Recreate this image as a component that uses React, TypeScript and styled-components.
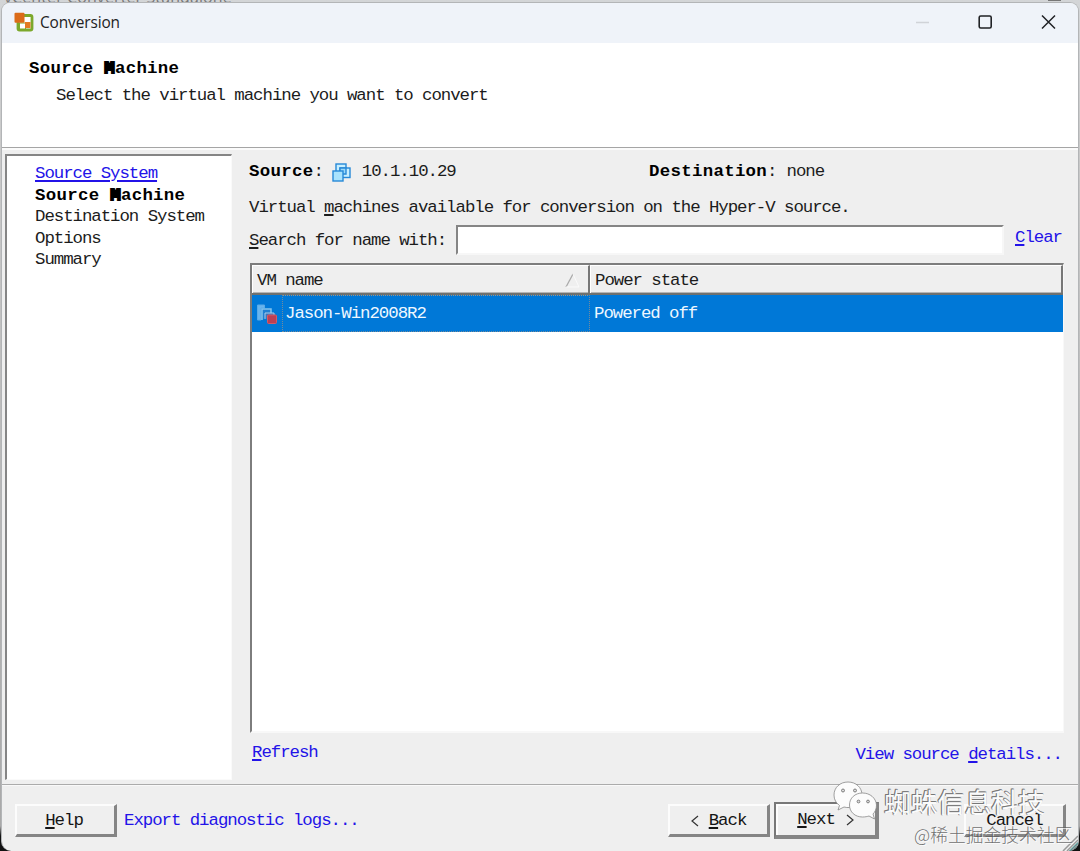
import React from "react";
import styled, { createGlobalStyle } from "styled-components";

const GlobalStyle = createGlobalStyle`
  * { box-sizing: border-box; }
  body { margin: 0; overflow: hidden; background: #d5d7d9; }
`;

const Desktop = styled.div`
  position: relative;
  width: 1080px;
  height: 851px;
  padding: 2px 1px 0 1px;
  overflow: hidden;
  background: linear-gradient(to bottom, #d3d5d7 0, #c9c9c9 150px, #a9a9a9 826px, #111 836px);
  color: #1c1c1c;
  font-family: "Liberation Mono", "Noto Sans CJK SC", monospace;
  font-size: 17.4px;
  line-height: 22px;
  letter-spacing: -1.05px;
`;

const BackWindowTitle = styled.div`
  position: absolute;
  left: 4px;
  top: -12px;
  font: 16px/18px "Open Sans", sans-serif;
  letter-spacing: 0.1px;
  color: #777;
`;

const BackWindowControl = styled.div`
  position: absolute;
  left: 1048px;
  top: 0;
  width: 13px;
  height: 1px;
  background: #777;
`;

const Window = styled.main`
  position: relative;
  display: flex;
  flex-direction: column;
  width: 1078px;
  height: 849px;
  overflow: hidden;
  background: #efefef;
  border: 1px solid #b3b5b7;
  border-bottom: 0;
  border-radius: 9px 9px 10px 10px;
`;

const TitleBar = styled.header`
  display: flex;
  align-items: center;
  flex: 0 0 40px;
  padding: 0 22px 2px 12px;
  background: #eff3f9;
`;

const AppTitle = styled.h1`
  flex: 1;
  margin: 0 0 0 5px;
  padding-top: 1px;
  font: 400 15.4px/24px "Open Sans", sans-serif;
  letter-spacing: -0.1px;
  color: #222;
`;

const WindowControls = styled.div`
  display: flex;
  gap: 48px;
`;

const Intro = styled.section`
  flex: 0 0 104px;
  padding: 15px 27px;
  background: #fff;
`;

const Strong = styled.strong`
  font-weight: 700;
  letter-spacing: 0.3px;
  color: #000;
`;

const FilledLetter = styled.span`
  -webkit-text-stroke: 2px #000;
`;

const IntroText = styled.p`
  margin: 5px 0 0 27px;
`;

const Divider = styled.hr`
  flex: 0 0 3px;
  width: 100%;
  margin: 0;
  border: 0;
  border-top: 1px solid #a5a5a5;
  background: #fbfbfb;
`;

const Body = styled.section`
  display: flex;
  flex: 0 0 634px;
  padding: 4px 13px 0 3px;
`;

const Steps = styled.nav`
  display: flex;
  flex-direction: column;
  width: 227px;
  height: 626px;
  padding: 7px 0 0 28px;
  background: #fff;
  border: solid #fafafa;
  border-width: 2px 1px 1px 2px;
  border-top-color: #858585;
  border-left-color: #858585;
  line-height: 21.6px;
`;

const Link = styled.a<{ $underlined?: boolean }>`
  color: #2313e8;
  text-decoration: ${(p) => (p.$underlined ? "underline" : "none")};
  text-decoration-thickness: 1.5px;
  text-underline-offset: 2px;
  white-space: nowrap;
`;

const Key = styled.span`
  text-decoration: underline;
  text-decoration-thickness: 1.5px;
  text-underline-offset: 2px;
`;

const Content = styled.section`
  display: flex;
  flex-direction: column;
  flex: 1;
  padding-left: 17px;
`;

const Endpoints = styled.div`
  display: grid;
  grid-template-columns: 400px 1fr;
  height: 22px;
  margin-top: 7px;
`;

const Endpoint = styled.div`
  display: flex;
  align-items: center;
`;

const SourceAddress = styled.span`
  display: flex;
  align-items: center;
  gap: 11px;
  margin-left: 9px;
`;

const DestinationName = styled.span`
  margin-left: 10px;
`;

const Hint = styled.p`
  margin: 14px 0 0;
`;

const SearchRow = styled.div`
  display: flex;
  height: 31px;
  margin-top: 6px;
`;

const SearchLabel = styled.label`
  width: 207px;
  padding-top: 5px;
`;

const SearchInput = styled.input`
  width: 548px;
  height: 30px;
  padding: 0 6px;
  background: #fff;
  border: 2px solid #f7f7f7;
  border-top-color: #858585;
  border-left-color: #858585;
  border-radius: 0;
  outline: 0;
`;

const ClearCell = styled.div`
  padding: 2px 0 0 11px;
`;

const Table = styled.div`
  display: flex;
  flex-direction: column;
  width: 814px;
  height: 470px;
  margin: 7px 0 0 1px;
  background: #fff;
  border: solid #f8f8f8;
  border-width: 2px 1px 2px 2px;
  border-top-color: #7d7d7d;
  border-left-color: #7d7d7d;
`;

const TableHead = styled.div`
  display: grid;
  grid-template-columns: 338px 1fr;
  flex: 0 0 30px;
  background: #efefef;
  border-bottom: 2px solid #6f716f;
`;

const HeadCell = styled.div`
  display: flex;
  justify-content: space-between;
  align-items: center;
  padding: 2px 7px 0 4px;
  border-top: 1px solid #fff;
  border-right: 2px solid #777;
  border-left: 1px solid #fff;
  box-shadow: inset 0 -1px 0 #b5b5b5;
`;

const TableRow = styled.div`
  display: grid;
  grid-template-columns: 30px 308px 1fr;
  flex: 0 0 37px;
  color: #eef7ff;
  background: #0078d7;
`;

const IconCell = styled.div`
  display: flex;
  align-items: center;
  padding-left: 4px;
`;

const NameCell = styled.div`
  display: flex;
  align-items: center;
  padding-left: 2px;
  border: 1px dotted #748b9b;
  border-top-color: #9c9488;
`;

const StateCell = styled.div`
  display: flex;
  align-items: center;
  padding-left: 4px;
`;

const TableLinks = styled.div`
  display: flex;
  justify-content: space-between;
  margin-top: 9px;
  padding: 0 3px 0 3px;
`;

const DetailsLink = styled(Link)`
  padding-top: 2px;
`;

const Footer = styled.footer`
  display: flex;
  align-items: center;
  flex: 1;
  padding: 5px 12px 0 13px;
  border-top: 1px solid #ababab;
  box-shadow: inset 0 1px 0 #f9f9f9;
`;

const Button = styled.button<{ $primary?: boolean }>`
  display: flex;
  align-items: center;
  justify-content: center;
  width: ${(p) => (p.$primary ? 105 : 102)}px;
  height: ${(p) => (p.$primary ? 37 : 33)}px;
  padding: 1px 0 0;
  background: #efefef;
  border: 2px solid #fcfcfc;
  border-right: ${(p) => (p.$primary ? 4 : 3)}px solid #858585;
  border-bottom: ${(p) => (p.$primary ? 4 : 3)}px solid #858585;
  ${(p) =>
    p.$primary &&
    "border-top-color: #777; border-left-color: #777; box-shadow: inset 2px 2px 0 #fcfcfc;"}
  color: #151515;
  font: inherit;
  letter-spacing: inherit;
`;

const HelpButton = styled(Button)`
  padding-right: 3px;
`;

const ExportLink = styled(Link)`
  flex: 1;
  margin-left: 7px;
`;

const WizardButtons = styled.div`
  display: flex;
  align-items: center;
  gap: 4px;
`;

const CancelSlot = styled.div`
  display: flex;
  margin-left: 81px;
`;

const Chevron = styled.svg`
  width: 8px;
  height: 14px;
  margin: 0 10px 0 0;
  fill: none;
  stroke: #333;
  stroke-width: 1.2;
`;

const NextChevron = styled(Chevron)`
  margin: 0 0 0 11px;
`;

const Grip = styled.svg`
  position: absolute;
  right: 0;
  bottom: 0;
`;

const AccountMark = styled.div`
  position: absolute;
  left: 833px;
  top: 779px;
  display: flex;
  gap: 7px;
`;

const AccountName = styled.span`
  margin-top: 4px;
  font: 400 27px/38px "Noto Sans CJK SC", sans-serif;
  letter-spacing: -0.2px;
  color: #fbfbfb;
  text-shadow: -1px -1px 0 #777, 0 -1px 0 #888, -1px 0 0 #888;
  white-space: nowrap;
`;

const SiteMark = styled.div`
  position: absolute;
  left: 914px;
  top: 822px;
  font: 300 17.8px/25px "Noto Sans CJK SC", sans-serif;
  letter-spacing: 0;
  color: rgba(90, 90, 90, 0.85);
  text-shadow: 1px 1px 0 rgba(255, 255, 255, 0.8);
  white-space: nowrap;
`;

const ConverterLogo = () => (
  <svg width="21" height="21" viewBox="0 0 21 21">
    <rect x="4" y="3.5" width="14" height="14.5" rx="1.5" fill="#fff" stroke="#7ca82b" strokeWidth="2.8" />
    <rect x="5.5" y="11" width="6" height="6" fill="#fff" stroke="#7ca82b" strokeWidth="1" />
    <rect x="0.5" y="0.8" width="10" height="10" rx="1" fill="#db6b19" />
    <rect x="11" y="10" width="5.5" height="6" fill="#e37a22" />
  </svg>
);

const MachinesIcon = () => (
  <svg width="19" height="19" viewBox="0 0 19 19" fill="#c7efff" stroke="#2789d8" strokeWidth="1.4">
    <rect x="4" y="1" width="10" height="10" />
    <rect x="8" y="5" width="10" height="9.5" />
    <path d="M8 5h6v6H8z" fill="#9ad9fa" />
    <rect x="1" y="8" width="10" height="10" fill="#a9e3fd" />
  </svg>
);

const PoweredOffIcon = () => (
  <svg width="22" height="22" viewBox="0 0 22 22">
    <path d="M1.5 17V2h7v3H5v12z" fill="#68b5ef" stroke="#5aaae6" />
    <path d="M6 17V6h9v4" fill="#1f7fd2" stroke="#83c3ed" strokeWidth="1.5" />
    <path d="M9 16v-6h9v4" fill="#3a78be" stroke="#a7cde9" />
    <rect x="11.5" y="12" width="9" height="8.5" rx="1" fill="#bb4055" stroke="#d35b68" />
  </svg>
);

const ChatMark = () => (
  <svg width="44" height="42" viewBox="0 0 44 42" fill="#fcfcfc" stroke="#888" strokeWidth="0.8">
    <path d="M15 3C7 3 1 8.5 1 16c0 4.5 2 8 5.5 10.5L5 31l6-3c7 2 18-1 18-12C29 8.5 23 3 15 3Z" />
    <path d="M29.5 14C22 14 16.5 19 16.5 26S22 38 29.5 38c2.5 0 5-.5 6.5-1l5.5 3-1.5-5c2-2 3.5-5 3.5-9C43 19 37 14 29.5 14Z" />
    <g fill="#ddd" stroke="#666">
      <circle cx="10" cy="11.5" r="1.5" />
      <circle cx="22" cy="11.5" r="1.5" />
      <circle cx="25.5" cy="22.5" r="1.4" />
      <circle cx="35" cy="22.5" r="1.4" />
    </g>
  </svg>
);

const SourceMachine = () => (
  <Strong>
    Source <FilledLetter>M</FilledLetter>achine
  </Strong>
);

export default function App() {
  return (
    <Desktop>
      <GlobalStyle />
      <BackWindowTitle>vCenter Converter Standalone</BackWindowTitle>
      <BackWindowControl />
      <Window>
        <TitleBar>
          <ConverterLogo />
          <AppTitle>Conversion</AppTitle>
          <WindowControls>
            <svg width="14" height="16" viewBox="0 0 14 16">
              <path d="M0 8.5h13" stroke="#d0d3d8" strokeWidth="1.3" />
            </svg>
            <svg width="15" height="16" viewBox="0 0 15 16">
              <rect x="1.2" y="2" width="12" height="12" rx="1.5" fill="none" stroke="#202225" strokeWidth="1.6" />
            </svg>
            <svg width="15" height="16" viewBox="0 0 15 16">
              <path d="m1 1.5 13 13m0-13-13 13" stroke="#202225" strokeWidth="1.5" />
            </svg>
          </WindowControls>
        </TitleBar>
        <Intro>
          <SourceMachine />
          <IntroText>Select the virtual machine you want to convert</IntroText>
        </Intro>
        <Divider />
        <Body>
          <Steps>
            <Link $underlined>Source System</Link>
            <SourceMachine />
            <span>Destination System</span>
            <span>Options</span>
            <span>Summary</span>
          </Steps>
          <Content>
            <Endpoints>
              <Endpoint>
                <Strong>Source</Strong>:
                <SourceAddress>
                  <MachinesIcon />
                  10.1.10.29
                </SourceAddress>
              </Endpoint>
              <Endpoint>
                <Strong>Destination</Strong>:
                <DestinationName>none</DestinationName>
              </Endpoint>
            </Endpoints>
            <Hint>
              Virtual <Key>m</Key>achines available for conversion on the Hyper-V source.
            </Hint>
            <SearchRow>
              <SearchLabel htmlFor="search">
                <Key>S</Key>earch for name with:
              </SearchLabel>
              <SearchInput id="search" />
              <ClearCell>
                <Link>
                  <Key>C</Key>lear
                </Link>
              </ClearCell>
            </SearchRow>
            <Table>
              <TableHead>
                <HeadCell>
                  VM name
                  <svg width="16" height="16" viewBox="0 0 16 16" fill="none">
                    <path d="M8 1 1 14" stroke="#aaa" strokeWidth="1.3" />
                    <path d="m8 1 6 13H1" stroke="#fafafa" />
                  </svg>
                </HeadCell>
                <HeadCell>Power state</HeadCell>
              </TableHead>
              <TableRow>
                <IconCell>
                  <PoweredOffIcon />
                </IconCell>
                <NameCell>Jason-Win2008R2</NameCell>
                <StateCell>Powered off</StateCell>
              </TableRow>
            </Table>
            <TableLinks>
              <Link>
                <Key>R</Key>efresh
              </Link>
              <DetailsLink>
                View source <Key>d</Key>etails...
              </DetailsLink>
            </TableLinks>
          </Content>
        </Body>
        <Footer>
          <HelpButton>
            <Key>H</Key>elp
          </HelpButton>
          <ExportLink>
            Export dia<Key>g</Key>nostic logs...
          </ExportLink>
          <WizardButtons>
            <Button>
              <Chevron viewBox="0 0 8 14">
                <path d="M7 2 1 7l6 5" />
              </Chevron>
              <Key>B</Key>ack
            </Button>
            <Button $primary>
              <Key>N</Key>ext
              <NextChevron viewBox="0 0 8 14">
                <path d="m1 2 6 5-6 5" />
              </NextChevron>
            </Button>
            <CancelSlot>
              <Button>Cancel</Button>
            </CancelSlot>
          </WizardButtons>
        </Footer>
        <Grip width="16" height="16" viewBox="0 0 16 16">
          <path d="M16 7v9H7z" fill="#16827f" />
          <path d="M1 16 16 1M5 16 16 5M9 16 16 9" stroke="#999" strokeWidth="1.5" />
        </Grip>
      </Window>
      <AccountMark>
        <ChatMark />
        <AccountName>蜘蛛信息科技</AccountName>
      </AccountMark>
      <SiteMark>@稀土掘金技术社区</SiteMark>
    </Desktop>
  );
}
